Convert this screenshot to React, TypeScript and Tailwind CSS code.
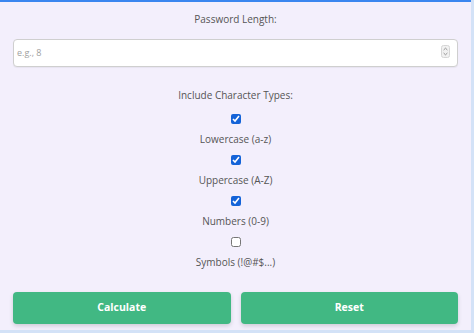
import { useState } from 'react';

const TYPES = [
  { key: 'lower', label: 'Lowercase (a-z)', on: true },
  { key: 'upper', label: 'Uppercase (A-Z)', on: true },
  { key: 'numbers', label: 'Numbers (0-9)', on: true },
  { key: 'symbols', label: 'Symbols (!@#$...)', on: false },
];

export default function App() {
  const [checked, setChecked] = useState<Record<string, boolean>>(
    Object.fromEntries(TYPES.map((t) => [t.key, t.on]))
  );
  const [length, setLength] = useState('');

  return (
    <div className="w-full h-[333px] bg-[#d3e2f7] font-['Open_Sans',sans-serif]">
      <div className="w-[471px] h-[330px] bg-[#f3effc] border-t-2 border-[#3a86ef] px-[13px] pt-[9px] flex flex-col">
        <label className="block text-center text-[10px] leading-4 text-[#555]">Password Length:</label>

        {/* length input with drawn spinner */}
        <div className="relative mt-[11px]">
          <input
            type="text"
            value={length}
            onChange={(e) => setLength(e.target.value)}
            placeholder="e.g., 8"
            className="w-full h-[28px] bg-white border border-[#cfcfcf] rounded-[4px] pl-[3px] text-[9px] text-[#333] placeholder:text-[#a0a0a0] outline-none shadow-[0_1px_1px_rgba(0,0,0,0.05)]"
          />
          <svg className="absolute right-[8px] top-[7px]" width="9" height="13" viewBox="0 0 9 13">
            <rect x="0.5" y="0.5" width="8" height="12" rx="2" fill="#f1f1f1" stroke="#d6d6d6" />
            <path d="M2.6 5 L4.5 3.2 L6.4 5" fill="none" stroke="#7a7a7a" strokeWidth="0.8" />
            <path d="M2.6 8 L4.5 9.8 L6.4 8" fill="none" stroke="#7a7a7a" strokeWidth="0.8" />
          </svg>
        </div>

        <div className="mt-[20px] text-center text-[10px] leading-4 text-[#555]">Include Character Types:</div>

        <div className="mt-[11px] flex flex-col items-center gap-[8px]">
          {TYPES.map((t) => (
            <label key={t.key} className="flex flex-col items-center gap-[7px]">
              <input
                type="checkbox"
                checked={checked[t.key]}
                onChange={() => setChecked({ ...checked, [t.key]: !checked[t.key] })}
                className="w-[10px] h-[10px] m-0 accent-[#1463d8]"
              />
              <span className="text-[10px] leading-4 text-[#555]">{t.label}</span>
            </label>
          ))}
        </div>

        <div className="mt-[22px] grid grid-cols-2 gap-[10px]">
          <button className="h-[32px] rounded-[4px] bg-[#41b883] text-white text-[10.5px] font-bold shadow-[0_2px_4px_rgba(0,0,0,0.15)]">
            Calculate
          </button>
          <button className="h-[32px] rounded-[4px] bg-[#41b883] text-white text-[10.5px] font-bold shadow-[0_2px_4px_rgba(0,0,0,0.15)]">
            Reset
          </button>
        </div>
      </div>
    </div>
  );
}
